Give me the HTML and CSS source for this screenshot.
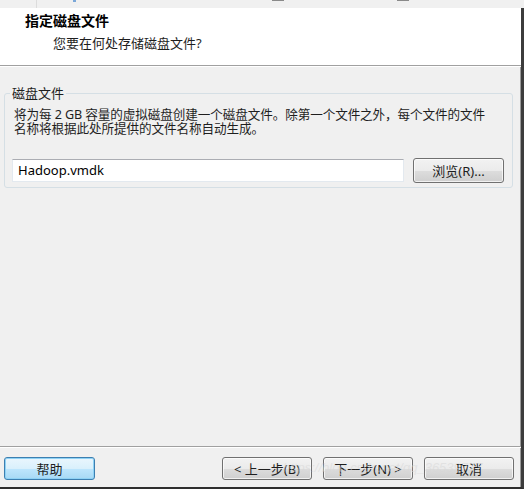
FILE: index.html
```html
<!DOCTYPE html>
<html lang="zh-CN">
<head>
<meta charset="utf-8">
<title>指定磁盘文件</title>
<link rel="stylesheet" href="styles.css">
</head>
<body>
<div class="topstrip">
  <span class="tick tick-a"></span>
  <span class="tick tick-b"></span>
  <span class="bar bar-a"></span>
  <span class="bar bar-b"></span>
</div>
<div class="window">
  <div class="header">
    <div class="title">指定磁盘文件</div>
    <div class="subtitle">您要在何处存储磁盘文件?</div>
  </div>
  <div class="main">
    <fieldset class="group">
      <legend class="legend">磁盘文件</legend>
      <div class="desc">
        <div class="line">将为每 2 GB 容量的虚拟磁盘创建一个磁盘文件。除第一个文件之外，每个文件的文件</div>
        <div class="line">名称将根据此处所提供的文件名称自动生成。</div>
      </div>
      <div class="filerow">
        <div class="input">Hadoop.vmdk</div>
        <div class="btn browse">浏览(R)...</div>
      </div>
    </fieldset>
  </div>
  <div class="footer">
    <div class="btn help">帮助</div>
    <div class="spacer"></div>
    <div class="btn">&lt; 上一步(B)</div>
    <div class="btn">下一步(N) &gt;</div>
    <div class="btn">取消</div>
    <div class="watermark">https://blog.csdn.net/qq_36539777</div>
  </div>
</div>
</body>
</html>
```

FILE: styles.css
```css
* { box-sizing: border-box; }
html, body {
  margin: 0;
  padding: 0;
  width: 524px;
  height: 489px;
  overflow: hidden;
  background: #f0f0f0;
  font-family: "Noto Sans", "Noto Sans CJK SC", sans-serif;
  font-size: 13px;
  color: #1e1e1e;
}
.topstrip {
  height: 8px;
  background: #f0f0f0;
  display: flex;
  align-items: flex-start;
}
.tick {
  width: 1px;
  height: 8px;
  background: #dcdcdc;
}
.tick-a { margin-left: 36px; }
.tick-b { margin-left: 36px; width: 3px; height: 2px; background: #7aa7d8; }
.bar {
  height: 1px;
  width: 12px;
  background: #8a8a8a;
}
.bar-a { margin-left: 196px; }
.bar-b { margin-left: 113px; }

.window {
  height: 481px;
  display: flex;
  flex-direction: column;
  border-right: 3px solid #3c3c3c;
  border-bottom: 2px solid #2e2e2e;
  box-shadow: inset -1px 0 0 #9a9a9a;
  position: relative;
}
.header {
  height: 58px;
  background: #ffffff;
  border-bottom: 1px solid #a0a0a0;
  padding-top: 4px;
}
.title {
  font-weight: bold;
  font-size: 14px;
  line-height: 17px;
  padding-left: 25px;
  color: #000;
}
.subtitle {
  font-size: 13px;
  line-height: 17px;
  padding-left: 53px;
  margin-top: 6px;
  color: #1e1e1e;
}
.main {
  flex: 1;
  border-top: 1px solid #ffffff;
  padding: 19px 0 0 4px;
}
.group {
  margin: 0;
  width: 509px;
  border: 1px solid #d5dfe5;
  border-radius: 3px;
  padding: 0 8px 4px 8px;
}
.legend {
  padding: 0 2px;
  margin-left: -3px;
  font-size: 13px;
  line-height: 14px;
  color: #1e1e1e;
}
.desc {
  margin-top: 8px;
  margin-left: 1px;
  font-size: 12.6px;
  letter-spacing: -0.1px;
  white-space: nowrap;
}
.line {
  height: 14px;
  line-height: 14px;
  overflow: visible;
}
.filerow {
  margin-top: 22px;
  display: flex;
  align-items: center;
  height: 25px;
}
.input {
  width: 392px;
  height: 23px;
  margin-left: -1px;
  background: #fff;
  border: 1px solid #e3e9ef;
  border-top-color: #abadb3;
  padding-left: 5px;
  line-height: 20px;
  font-size: 13px;
  color: #000;
}
.btn {
  width: 90px;
  height: 23px;
  border: 1px solid #707070;
  border-radius: 3px;
  background: linear-gradient(#f2f2f2 0%, #ebebeb 50%, #dddddd 51%, #cfcfcf 100%);
  box-shadow: inset 0 0 0 1px rgba(255,255,255,0.7);
  display: flex;
  align-items: center;
  justify-content: center;
  font-size: 13px;
  color: #1e1e1e;
  flex-shrink: 0;
}
.browse {
  width: 91px;
  height: 25px;
  margin-left: 9px;
}
.footer {
  height: 41px;
  border-top: 1px solid #a0a0a0;
  box-shadow: inset 0 1px 0 #ffffff;
  display: flex;
  align-items: flex-start;
  padding: 10px 7px 0 4px;
  gap: 11px;
  position: relative;
}
.help {
  width: 91px;
  border-color: #3c7fb1;
  background: linear-gradient(#eaf6fd 0%, #d9f0fc 50%, #bee6fd 51%, #a7d9f5 100%);
  box-shadow: inset 0 0 0 1px #8fd2f5;
}
.spacer { flex: 1; }
.watermark {
  position: absolute;
  left: 283px;
  top: 13px;
  font-family: "Liberation Sans", sans-serif;
  font-size: 13px;
  font-style: italic;
  line-height: 16px;
  color: rgba(215, 215, 215, 0.55);
  white-space: nowrap;
  pointer-events: none;
}
```
